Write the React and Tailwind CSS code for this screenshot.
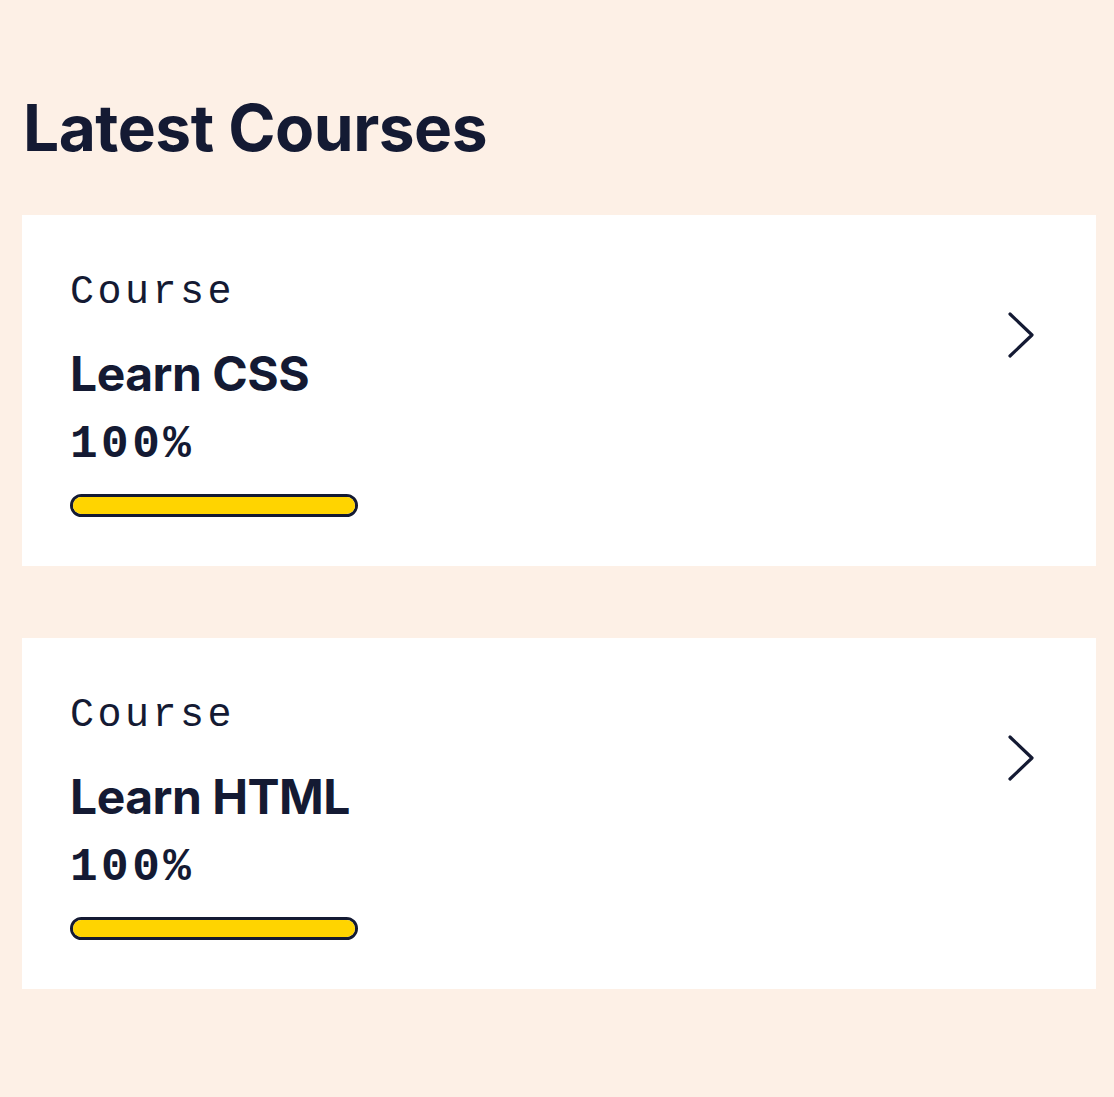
const courses = [
  { id: 1, title: 'Learn CSS', progress: 100 },
  { id: 2, title: 'Learn HTML', progress: 100 },
];

const ChevronRight = () => (
  <svg width="30" height="52" viewBox="0 0 30 52" fill="none" className="mr-[12px] shrink-0">
    <path d="M4 4 L26 25 L4 46" stroke="#141a33" strokeWidth="3.2" strokeLinecap="round" strokeLinejoin="round" />
  </svg>
);

const CourseCard = ({ course }) => (
  <div className="bg-white pl-[48px] pr-[48px] pt-[58px] pb-[49px]">
    <div className="flex items-center justify-between">
      <div>
        <p className="font-['Liberation_Mono',monospace] text-[40px] leading-none tracking-[3.5px] text-[#141a33]">
          Course
        </p>
        <h2 className="mt-[37px] font-['Inter',sans-serif] text-[48px] font-bold leading-none tracking-[-0.5px] text-[#141a33]">
          {course.title}
        </h2>
      </div>
      <ChevronRight />
    </div>
    <p className="mt-[24px] font-['Liberation_Mono',monospace] text-[46px] font-bold leading-none tracking-[3.5px] text-[#141a33]">
      {course.progress}%
    </p>
    <div className="mt-[26px] h-[23px] w-[288px] rounded-full border-[3px] border-[#141a33] bg-white overflow-hidden">
      <div className="h-full bg-[#ffd400]" style={{ width: `${course.progress}%` }} />
    </div>
  </div>
);

export default function App() {
  return (
    <div className="min-h-screen bg-[#fdf0e6] pl-[22px] pr-[18px] pt-[96px] pb-[100px]">
      <h1 className="font-['Inter',sans-serif] text-[64px] font-bold leading-none tracking-[-0.5px] text-[#141a33] ml-[1px]">
        Latest Courses
      </h1>
      <div className="mt-[55px] flex flex-col gap-[72px]">
        {courses.map((course) => (
          <CourseCard key={course.id} course={course} />
        ))}
      </div>
    </div>
  );
}
